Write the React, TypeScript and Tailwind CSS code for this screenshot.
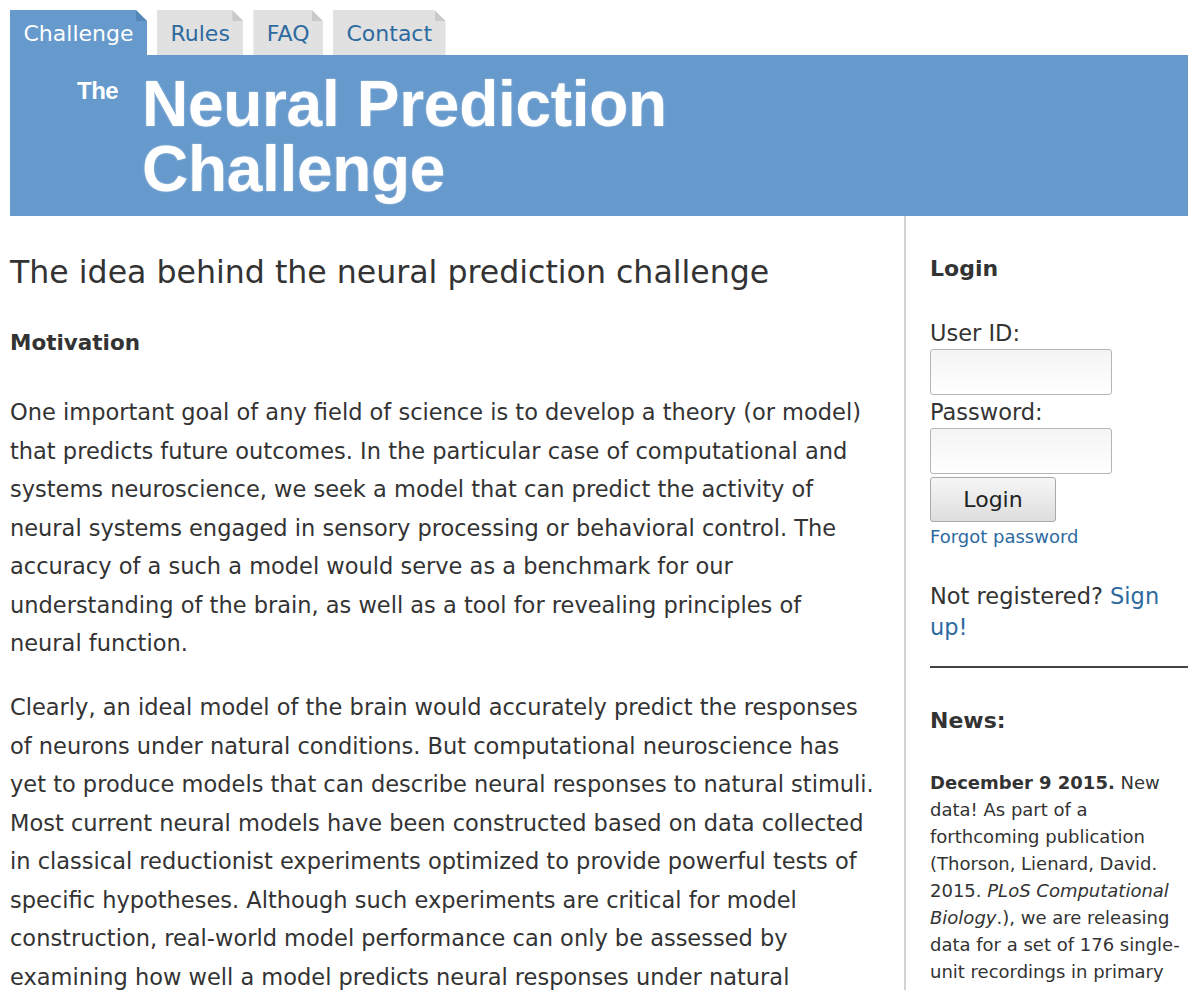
import React from 'react';

const tabs = [
    { label: 'Challenge', active: true },
    { label: 'Rules', active: false },
    { label: 'FAQ', active: false },
    { label: 'Contact', active: false },
];

const Tab = ({ label, active }: { label: string; active: boolean }) => (
    <div
        className={`relative h-[45px] px-[13.5px] flex items-center text-[22px] [clip-path:polygon(0_0,calc(100%-11px)_0,100%_11px,100%_100%,0_100%)] ${active ? 'bg-[#6699cc] text-white' : 'bg-[#e1e1e1] text-[#2d6a9f]'
            }`}
    >
        {/* esquina doblada */}
        <span
            className={`absolute top-0 right-0 w-[11px] h-[11px] [clip-path:polygon(0_0,100%_100%,0_100%)] ${active ? 'bg-[#5586b8]' : 'bg-[#c9c9c9]'
                }`}
        />
        <span className="leading-none mt-[2px]">{label}</span>
    </div>
);

export default function App() {
    return (
        <div className="min-h-[990px] bg-white pt-[10px] pl-[10px] pr-[12px] text-[#333] font-['DejaVu_Sans',Verdana,sans-serif] overflow-hidden">
            <nav className="flex gap-[10px]">
                {tabs.map((t) => (
                    <Tab key={t.label} label={t.label} active={t.active} />
                ))}
            </nav>

            {/* Banner */}
            <header className="h-[161px] bg-[#6699cc] flex items-start pl-[67px] pt-[17px] font-['Liberation_Sans',Arial,sans-serif] text-white font-bold">
                <span className="text-[24px] leading-none mt-[7px] w-[65px] tracking-[-0.5px]">The</span>
                <h1 className="text-[64px] leading-[65px] tracking-[-0.3px] [text-shadow:0_0_2px_rgba(255,255,255,0.5)]">
                    Neural Prediction
                    <br />
                    Challenge
                </h1>
            </header>

            <div className="flex">
                {/* Contenido principal */}
                <main className="w-[896px] shrink-0 pr-[28px] border-r-2 border-[#d4d4d4]">
                    <h2 className="mt-[37px] text-[31.6px] leading-[38px] font-normal">
                        The idea behind the neural prediction challenge
                    </h2>
                    <h3 className="mt-[33px] text-[21.5px] leading-[38px] font-bold">Motivation</h3>
                    <div className="text-[22.5px] leading-[38.5px]">
                        <p className="mt-[31px]">
                            One important goal of any field of science is to develop a theory (or model) that
                            predicts future outcomes. In the particular case of computational and systems
                            neuroscience, we seek a model that can predict the activity of neural systems engaged
                            in sensory processing or behavioral control. The accuracy of a such a model would serve
                            as a benchmark for our understanding of the brain, as well as a tool for revealing
                            principles of neural function.
                        </p>
                        <p className="mt-[25.5px]">
                            Clearly, an ideal model of the brain would accurately predict the responses of neurons
                            under natural conditions. But computational neuroscience has yet to produce models that
                            can describe neural responses to natural stimuli. Most current neural models have been
                            constructed based on data collected in classical reductionist experiments optimized to
                            provide powerful tests of specific hypotheses. Although such experiments are critical
                            for model construction, real-world model performance can only be assessed by examining
                            how well a model predicts neural responses under natural conditions.
                        </p>
                    </div>
                </main>

                {/* Barra lateral */}
                <aside className="flex-1 pl-[24px] text-[22.5px] leading-[31px]">
                    <h3 className="mt-[36.5px] text-[22px] font-bold">Login</h3>
                    <form className="mt-[34px] flex flex-col items-start" onSubmit={(e) => e.preventDefault()}>
                        <label htmlFor="uid">User ID:</label>
                        <input
                            id="uid"
                            className="w-[182px] h-[46px] rounded-[3px] border border-[#b5b5b5] bg-gradient-to-b from-[#f4f4f4] to-white"
                        />
                        <label htmlFor="pwd" className="mt-[2px]">Password:</label>
                        <input
                            id="pwd"
                            type="password"
                            className="w-[182px] h-[46px] rounded-[3px] border border-[#b5b5b5] bg-gradient-to-b from-[#f4f4f4] to-white"
                        />
                        <button
                            type="submit"
                            className="mt-[3px] w-[126px] h-[45px] rounded-[3px] border border-[#a9a9a9] bg-gradient-to-b from-[#f6f6f6] to-[#dedede] text-[22px] text-[#222]"
                        >
                            Login
                        </button>
                        <a href="#" className="mt-[1px] text-[18px] leading-[27px] text-[#2d6a9f]">
                            Forgot password
                        </a>
                    </form>
                    <p className="mt-[31px]">
                        Not registered?{' '}
                        <a href="#" className="text-[#2d6a9f]">
                            Sign up!
                        </a>
                    </p>
                    <hr className="mt-[23px] border-0 h-[2px] bg-[#444]" />
                    <h3 className="mt-[37px] text-[22px] font-bold">News:</h3>
                    <p className="mt-[33px] text-[18px] leading-[27px]">
                        <b>December 9 2015.</b> New data! As part of a forthcoming publication (Thorson, Lienard,
                        David. 2015. <i>PLoS Computational Biology</i>.), we are releasing data for a set of 176
                        single-unit recordings in primary auditory cortex of awake ferrets.
                    </p>
                </aside>
            </div>
        </div>
    );
}
